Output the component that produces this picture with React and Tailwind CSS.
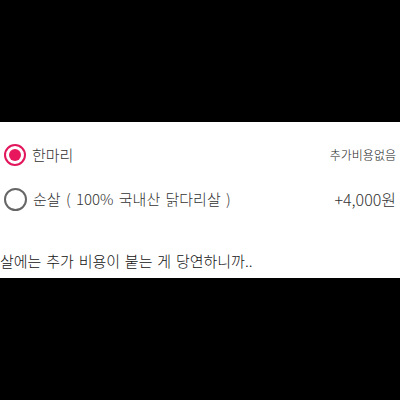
export default function App() {
  return (
    <div className="flex h-[400px] w-[400px] flex-col bg-black" style={{ fontFamily: '"Noto Sans CJK KR", "Noto Sans", sans-serif' }}>
      <div className="h-[122px]" />
      <div className="flex h-[156px] flex-col bg-white">
        <div className="mt-[22px] flex h-[22px] items-center justify-between pr-[4px]">
          <div className="flex items-center">
            <span className="ml-[4px] flex h-[22px] w-[22px] items-center justify-center rounded-full border-2 border-[#e2165c]">
              <span className="h-[12px] w-[12px] rounded-full bg-[#e8175d]" />
            </span>
            <span className="ml-[6px] text-[15px] font-light text-[#333]">한마리</span>
          </div>
          <span className="text-[12px] font-light text-[#222]">추가비용없음</span>
        </div>
        <div className="mt-[21px] flex h-[24px] items-center justify-between pr-[4px]">
          <div className="flex items-center">
            <span className="ml-[4px] h-[23px] w-[23px] rounded-full border-2 border-[#666]" />
            <span className="ml-[6px] text-[15px] font-light text-[#333] [word-spacing:2px]">순살 ( 100% 국내산 닭다리살 )</span>
          </div>
          <span className="text-[16px] font-light text-[#333]">+4,000원</span>
        </div>
        <div className="mt-[39px] text-[15px] font-light text-[#111] [word-spacing:1.5px]">살에는 추가 비용이 붙는 게 당연하니까..</div>
      </div>
    </div>
  );
}
